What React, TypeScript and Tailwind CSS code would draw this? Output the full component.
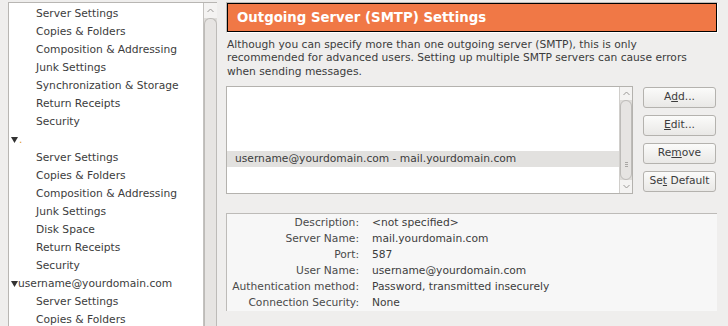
import React from 'react';

const treeItems: { label: string; level: 0 | 1; dot?: boolean }[] = [
  { label: 'Server Settings', level: 1 },
  { label: 'Copies & Folders', level: 1 },
  { label: 'Composition & Addressing', level: 1 },
  { label: 'Junk Settings', level: 1 },
  { label: 'Synchronization & Storage', level: 1 },
  { label: 'Return Receipts', level: 1 },
  { label: 'Security', level: 1 },
  { label: '', level: 0, dot: true },
  { label: 'Server Settings', level: 1 },
  { label: 'Copies & Folders', level: 1 },
  { label: 'Composition & Addressing', level: 1 },
  { label: 'Junk Settings', level: 1 },
  { label: 'Disk Space', level: 1 },
  { label: 'Return Receipts', level: 1 },
  { label: 'Security', level: 1 },
  { label: 'username@yourdomain.com', level: 0 },
  { label: 'Server Settings', level: 1 },
  { label: 'Copies & Folders', level: 1 },
];

const details = [
  ['Description:', '<not specified>'],
  ['Server Name:', 'mail.yourdomain.com'],
  ['Port:', '587'],
  ['User Name:', 'username@yourdomain.com'],
  ['Authentication method:', 'Password, transmitted insecurely'],
  ['Connection Security:', 'None'],
];

function Twisty() {
  return (
    <svg width="7" height="6" viewBox="0 0 7 6" className="shrink-0">
      <path d="M0 0 L7 0 L3.5 6 Z" fill="#333333" />
    </svg>
  );
}

function ArrowUp() {
  return (
    <svg width="7" height="5" viewBox="0 0 7 5">
      <path d="M0.5 4 L3.5 1 L6.5 4" fill="none" stroke="#9a9896" strokeWidth="1" />
    </svg>
  );
}

function ArrowDown() {
  return (
    <svg width="7" height="5" viewBox="0 0 7 5">
      <path d="M0.5 1 L3.5 4 L6.5 1" fill="none" stroke="#9a9896" strokeWidth="1" />
    </svg>
  );
}

function Btn({ pre, key1, post }: { pre: string; key1: string; post: string }) {
  return (
    <button className="h-[21px] w-[73px] rounded-[3px] border border-[#b4b2ae] bg-gradient-to-b from-[#fbfbfa] to-[#e9e8e6] text-[10.7px] text-[#3c3c3c] flex items-center justify-center">
      <span className="whitespace-pre">
        {pre}
        <span className="underline underline-offset-[1px]">{key1}</span>
        {post}
      </span>
    </button>
  );
}

export default function App() {
  return (
    <div
      className="w-[728px] h-[326px] overflow-hidden bg-[#efeeed] flex text-[#3c3c3c]"
      style={{ fontFamily: '"DejaVu Sans", Verdana, sans-serif' }}
    >
      {/* account tree */}
      <div className="ml-[8px] mt-[2px] w-[209px] flex border-t border-l border-[#b8b6b3] bg-white">
        <div className="flex-1 flex flex-col pt-[2px]">
          {treeItems.map((it, i) => (
            <div
              key={i}
              className={`h-[18px] shrink-0 flex items-center text-[10.7px] whitespace-nowrap ${it.level === 1 ? 'pl-[27px]' : 'pl-[2px]'}`}
            >
              {it.level === 0 && <Twisty />}
              {it.dot && <span className="text-[#e0a030] leading-none ml-[1px]">.</span>}
              {it.label}
            </div>
          ))}
        </div>
        <div className="w-[14px] bg-[#dedcd9] border-l border-[#c4c2bf] flex flex-col">
          <div className="h-[15px] bg-[#f4f3f2] flex items-center justify-center">
            <ArrowUp />
          </div>
          <div className="flex-1 bg-[#e6e4e2] border-x border-t border-[#bdbbb8] rounded-t-[6px]" />
        </div>
      </div>

      {/* right pane */}
      <div className="ml-[9px] w-[492px] flex flex-col">
        <div className="mt-[2px] border-t border-l border-[#bdbbb8] border-b border-r border-b-white border-r-white">
          <div className="h-[29px] bg-[#f07846] border border-black flex items-center pl-[9px] text-white font-bold text-[13.3px]">
            Outgoing Server (SMTP) Settings
          </div>
        </div>

        <p className="mt-[5px] pl-[1px] text-[10.7px] leading-[13.3px] text-[#3c3c3c]">
          Although you can specify more than one outgoing server (SMTP), this is only
          <br />
          recommended for advanced users. Setting up multiple SMTP servers can cause errors
          <br />
          when sending messages.
        </p>

        <div className="mt-[8px] flex">
          <div className="w-[407px] h-[108px] border border-[#b4b2ae] bg-white flex">
            <div className="flex-1 flex flex-col pt-[64px]">
              <div className="h-[16px] bg-[#e2e1df] flex items-center pl-[8px] text-[10.7px] whitespace-nowrap">
                username@yourdomain.com - mail.yourdomain.com
              </div>
            </div>
            <div className="w-[13px] bg-[#dedcd9] flex flex-col border-l border-[#d0cecb]">
              <div className="h-[13px] bg-[#f4f3f2] flex items-center justify-center">
                <ArrowUp />
              </div>
              <div className="flex-1 bg-[#e6e4e2] border border-[#bdbbb8] rounded-[6px] flex items-end justify-center pb-[12px]">
                <div className="flex flex-col gap-[1px]">
                  <div className="w-[3px] h-px bg-[#a9a7a4]" />
                  <div className="w-[3px] h-px bg-[#a9a7a4]" />
                  <div className="w-[3px] h-px bg-[#a9a7a4]" />
                </div>
              </div>
              <div className="h-[13px] bg-[#f4f3f2] flex items-center justify-center">
                <ArrowDown />
              </div>
            </div>
          </div>
          <div className="ml-[10px] mt-[1px] flex flex-col gap-[7px]">
            <Btn pre="A" key1="d" post="d..." />
            <Btn pre="" key1="E" post="dit..." />
            <Btn pre="Re" key1="m" post="ove" />
            <Btn pre="Se" key1="t" post=" Default" />
          </div>
        </div>

        <div className="mt-[19px] w-[491px] h-[98px] bg-[#f7f7f7] border-t border-l border-[#bdbbb8] pt-px">
          {details.map(([k, v]) => (
            <div key={k} className="h-[16px] flex items-center text-[10.7px] whitespace-nowrap">
              <div className="w-[132px] text-right text-[#4a4a4a]">{k}</div>
              <div className="ml-[13px] text-[#3c3c3c]">{v}</div>
            </div>
          ))}
        </div>
      </div>
    </div>
  );
}
